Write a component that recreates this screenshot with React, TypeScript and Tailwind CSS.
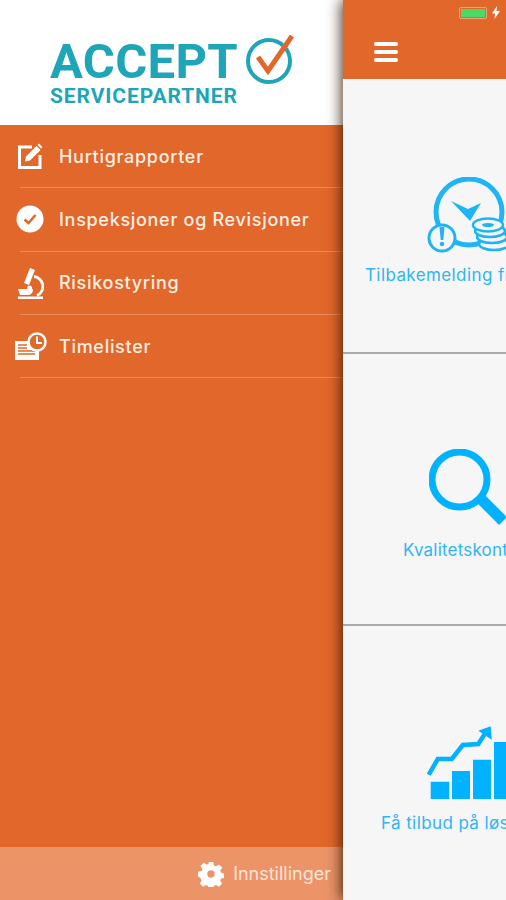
import React from "react";

const menuItems = [
  { label: "Hurtigrapporter", icon: <PencilIcon /> },
  { label: "Inspeksjoner og Revisjoner", icon: <CheckIcon /> },
  { label: "Risikostyring", icon: <MicroscopeIcon /> },
  { label: "Timelister", icon: <TimesheetIcon /> },
];

function PencilIcon() {
  return (
    <svg width="26" height="26" viewBox="0 0 26 26" fill="none">
      <path d="M15 4H2.5v20.5H23V12" stroke="#fff" strokeWidth="3" />
      <path d="M8 18.5l1-5L19.5 3l4 4L13 17.5z" fill="#fff" />
      <path d="M20.5 2l1.5-1.5 3.5 3.5L24 5.5z" fill="#fff" />
    </svg>
  );
}

function CheckIcon() {
  return (
    <svg width="28" height="28" viewBox="0 0 28 28">
      <circle cx="14" cy="14" r="13.5" fill="#fff" />
      <path d="M8.5 14.5l4 3.5 7-8" fill="none" stroke="#e2672a" strokeWidth="2.6" />
    </svg>
  );
}

function MicroscopeIcon() {
  return (
    <svg width="28" height="32" viewBox="0 0 28 32" fill="none">
      <path d="M14 1l5 2-6 15-5-2z" fill="#fff" />
      <path d="M18 9.500a10 10 0 0 1 3 19" stroke="#fff" strokeWidth="3" />
      <path d="M2 22h15c0 4-2 6-6 6H4z" fill="#fff" />
      <circle cx="13.500" cy="21" r="2.500" fill="#fff" />
      <rect x="2" y="29.500" width="25" height="2.500" fill="#fff" />
    </svg>
  );
}

function TimesheetIcon() {
  return (
    <svg width="33" height="29" viewBox="0 0 33 29" fill="none">
      <path d="M1 9h14v6h10v13H1z" fill="#fff" />
      <path d="M4 13h9M4 16h9M4 19h17M4 22h17" stroke="#e2672a" strokeWidth="1.3" />
      <circle cx="23" cy="10" r="8.5" fill="#e2672a" stroke="#fff" strokeWidth="2.5" />
      <path d="M23 4.5V11h5" stroke="#fff" strokeWidth="2" />
    </svg>
  );
}

function ClockCoinsIcon() {
  return (
    <svg width="79" height="78" viewBox="0 0 79 78" fill="none" className="shrink-0">
      <circle cx="42" cy="35" r="33" stroke="#1fb4f5" strokeWidth="5" />
      <path d="M24 24l17 8 13-6-11 18z" fill="#1fb4f5" />
      <circle cx="15" cy="61" r="13" fill="#f6f6f6" stroke="#1fb4f5" strokeWidth="3" />
      <path d="M12.500 50h5l-1.200 13h-2.600z" fill="#1fb4f5" />
      <circle cx="15" cy="67" r="2.200" fill="#1fb4f5" />
      <ellipse cx="67" cy="67" rx="15" ry="6" fill="#f6f6f6" stroke="#1fb4f5" strokeWidth="2.5" />
      <ellipse cx="65" cy="60" rx="15" ry="6" fill="#f6f6f6" stroke="#1fb4f5" strokeWidth="2.5" />
      <ellipse cx="63" cy="54" rx="15" ry="6" fill="#f6f6f6" stroke="#1fb4f5" strokeWidth="2.5" />
      <ellipse cx="61" cy="48" rx="15" ry="6.500" fill="#f6f6f6" stroke="#1fb4f5" strokeWidth="2.5" />
      <ellipse cx="61" cy="48" rx="6" ry="2" fill="#1fb4f5" />
    </svg>
  );
}

function SearchIcon() {
  return (
    <svg width="77" height="78" viewBox="0 0 77 78" fill="none" className="shrink-0">
      <circle cx="30.5" cy="30.5" r="27.5" stroke="#00b2ff" strokeWidth="7" />
      <path d="M52 50l22 22" stroke="#00b2ff" strokeWidth="11" />
    </svg>
  );
}

function ChartIcon() {
  return (
    <svg width="79" height="73" viewBox="0 0 79 73" fill="none" className="shrink-0">
      <path d="M3.7 55.7h18.6V73H3.7zM25 45h18v28H25zM46 33.7h18V73H46zM67 16h18v57H67z" fill="#00b2ff" />
      <path d="M1.800 48.700l9-15.700h14l11-14 15.500-1 6.500-10" stroke="#00b2ff" strokeWidth="4.500" />
      <path d="M63.700.3L51.300 4.700 64.700 13.700z" fill="#00b2ff" />
    </svg>
  );
}

function GearIcon() {
  return (
    <svg width="26" height="26" viewBox="0 0 26 26">
      <path
        fill="#fff"
        fillRule="evenodd"
        d="M10.500 0h5l.7 3.700 2.300 1 3.200-2.100 3.500 3.500-2.100 3.200 1 2.300 3.700.7v5l-3.700.7-1 2.300 2.100 3.200-3.500 3.500-3.200-2.100-2.300 1-.7 3.700h-5l-.7-3.700-2.300-1-3.200 2.100-3.500-3.500 2.100-3.200-1-2.300L-1 15.500v-5l3.700-.7 1-2.300L1.600 4.300l3.500-3.500 3.200 2.100 2.300-1zM13 9a4 4 0 1 0 0 8 4 4 0 0 0 0-8z"
        transform="translate(1 1) scale(0.92)"
      />
    </svg>
  );
}

const App: React.FC = () => {
  return (
    <div className="flex h-[900px] w-[506px] overflow-hidden font-['Inter',sans-serif]">
      {/* Drawer */}
      <div className="flex w-[343px] shrink-0 flex-col bg-[#e2672a]">
        <div className="flex h-[125px] bg-white pl-[50px] pt-[37px]">
          <div className="flex w-[195px] flex-col">
            <span className="font-['Roboto',sans-serif] text-[49px] font-bold leading-[49px] tracking-[0.3px] text-[#1fa5b8]">
              ACCEPT
            </span>
            <span className="font-['Roboto',sans-serif] text-[21px] font-bold leading-[20px] tracking-[0.9px] text-[#1fa5b8]">
              SERVICEPARTNER
            </span>
          </div>
          <svg width="50" height="50" viewBox="0 0 50 50" fill="none" className="-mt-[2px]">
            <circle cx="24" cy="26" r="21" stroke="#1fa5b8" strokeWidth="4" />
            <path d="M13 22l10 14L47 1" stroke="#e2672a" strokeWidth="5" />
          </svg>
        </div>

        <div className="flex-1">
          {menuItems.map((item) => (
            <div key={item.label}>
              <div className="flex h-[62.330px] items-center">
                <div className="flex w-[59px] justify-center pl-px">{item.icon}</div>
                <span className="whitespace-nowrap text-[18px] font-medium tracking-[0.7px] text-[#fdeee5]">
                  {item.label}
                </span>
              </div>
              <div className="ml-5 h-px bg-white/25" />
            </div>
          ))}
        </div>

        <div className="flex h-[53px] items-center justify-end gap-[9px] bg-[#ec9468] pr-[12px]">
          <GearIcon />
          <span className="text-[18px] text-[#fbe3d6]">Innstillinger</span>
        </div>
      </div>

      {/* Main panel */}
      <div className="relative flex w-[163px] shrink-0 flex-col overflow-hidden bg-[#f6f6f6] shadow-[-2px_0_13px_rgba(50,25,5,0.85)]">
        <div className="flex h-[79px] shrink-0 flex-col bg-[#e2672a]">
          <div className="flex h-[25px] items-center justify-end gap-[5px] pr-[6px]">
            <div className="flex h-[12px] w-[28px] items-center rounded-[2px] border border-[#f0a67e] p-px">
              <div className="h-full w-full bg-[#4cd964]" />
            </div>
            <svg width="8" height="13" viewBox="0 0 8 13">
              <path d="M5 0L0 7.500h3L2.500 13 8 5H4.500z" fill="#fff" />
            </svg>
          </div>
          <div className="ml-[31px] mt-[17px] flex w-[24px] flex-col gap-[4px]">
            <div className="h-[4px] rounded-full bg-white" />
            <div className="h-[4px] rounded-full bg-white" />
            <div className="h-[4px] rounded-full bg-white" />
          </div>
        </div>

        <div className="flex h-[275px] shrink-0 flex-col border-b-2 border-[#a9a9a9] pt-[98px]">
          <div className="ml-[84px]"><ClockCoinsIcon /></div>
          <span className="ml-[22px] mt-[8px] whitespace-nowrap text-[17px] tracking-[0.4px] text-[#2fb5f3]">
            Tilbakemelding fra kunde
          </span>
        </div>

        <div className="flex h-[272px] shrink-0 flex-col border-b-2 border-[#a9a9a9] pt-[95px]">
          <div className="ml-[86px]"><SearchIcon /></div>
          <span className="ml-[60px] mt-[11px] whitespace-nowrap text-[17px] tracking-[0.2px] text-[#2fb5f3]">
            Kvalitetskontroll
          </span>
        </div>

        <div className="flex flex-1 flex-col pt-[100px]">
          <div className="ml-[84px]"><ChartIcon /></div>
          <span className="ml-[38px] mt-[12px] whitespace-nowrap text-[17px] tracking-[0.4px] text-[#2fb5f3]">
            Få tilbud på løsninger
          </span>
        </div>
      </div>
    </div>
  );
};

export default App;
